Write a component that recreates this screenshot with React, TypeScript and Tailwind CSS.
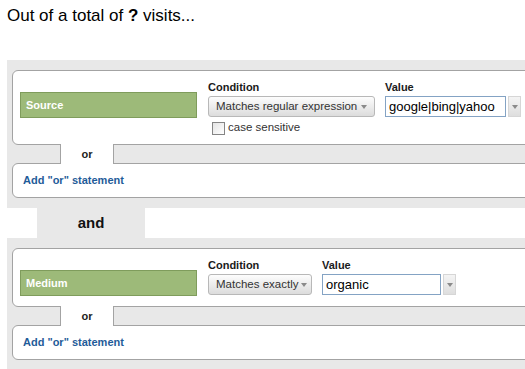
import React from "react";

const Arrow = () => (
  <span className="inline-block h-0 w-0 shrink-0 border-x-[3px] border-t-[4px] border-x-transparent border-t-[#8a8a8a]" />
);

function Select({ label, width }: { label: string; width: string }) {
  return (
    <div
      className={`flex h-[21px] ${width} items-center justify-between gap-[3px] whitespace-nowrap rounded-[3px] border border-[#b8b8b8] bg-gradient-to-b from-[#fdfdfd] to-[#dcdcdc] pl-[7px] pr-[7px] text-[11.5px] text-[#333]`}
    >
      <span>{label}</span>
      <Arrow />
    </div>
  );
}

function ValueBox({ value, width }: { value: string; width: string }) {
  return (
    <div className="flex items-center">
      <div
        className={`flex h-[21px] ${width} items-center whitespace-nowrap border border-[#84a3c4] bg-white pl-[3px] text-[13px] text-black`}
      >
        {value}
      </div>
      <div className="ml-[2px] flex h-[21px] w-[13px] items-center justify-center border border-[#d6d6d6] bg-gradient-to-b from-[#f4f4f4] to-[#dedede]">
        <Arrow />
      </div>
    </div>
  );
}

function ConditionCard({
  dimension,
  match,
  matchWidth,
  value,
  valueWidth,
  caseBox,
}: {
  dimension: string;
  match: string;
  matchWidth: string;
  value: string;
  valueWidth: string;
  caseBox?: boolean;
}) {
  return (
    <div className={`-mr-5 flex rounded-[6px] border border-[#a3a3a3] bg-white pl-[7px] pt-[10px] ${caseBox ? "pb-[9px]" : "pb-[10px]"}`}>
      {/* dimension chip */}
      <div className="mt-[11px] flex h-[26px] w-[177px] items-center border border-[#7f9c5c] bg-[#9dba79] pl-[5px] text-[11px] font-bold text-white">
        {dimension}
      </div>

      <div className="ml-[11px] flex flex-col">
        <span className="text-[11px] font-bold leading-[13px] text-[#1a1a1a]">Condition</span>
        <div className="mt-[2px]">
          <Select label={match} width={matchWidth} />
        </div>
        {caseBox && (
          <div className="ml-[4px] mt-[4px] flex h-[14px] items-center">
            <span className="h-[13px] w-[13px] border border-[#858585] bg-gradient-to-br from-[#e4e4e4] to-white" />
            <span className="ml-[3px] text-[11.5px] text-[#333]">case sensitive</span>
          </div>
        )}
      </div>

      <div className="ml-[10px] flex flex-col">
        <span className="text-[11px] font-bold leading-[13px] text-[#1a1a1a]">Value</span>
        <div className="mt-[2px]">
          <ValueBox value={value} width={valueWidth} />
        </div>
      </div>
    </div>
  );
}

function OrTab() {
  return (
    <div className="relative z-10 -my-px ml-[48px] flex h-[20px] w-[54px] items-center justify-center border-x border-[#a3a3a3] bg-white text-[11px] font-bold text-[#222]">
      or
    </div>
  );
}

function AddOr() {
  return (
    <div className="-mr-5 flex h-[35px] items-center rounded-[6px] border border-[#a3a3a3] bg-white pl-[10px] text-[11px] font-bold text-[#1f5c99]">
      Add "or" statement
    </div>
  );
}

export default function App() {
  return (
    <div className="h-[369px] w-[525px] overflow-hidden bg-white font-['Liberation_Sans',Arial,sans-serif]">
      <h1 className="pl-[7px] pt-[6px] text-[17px] leading-[20px] text-black">
        Out of a total of <b>?</b> visits...
      </h1>

      <div className="ml-[7px] mt-[34px] bg-[#e8e8e8] pb-[10px] pl-[5px] pt-[10px]">
        <ConditionCard
          dimension="Source"
          match="Matches regular expression"
          matchWidth="w-[167px]"
          value="google|bing|yahoo"
          valueWidth="w-[121px]"
          caseBox
        />
        <OrTab />
        <AddOr />
      </div>

      <div className="ml-[37px] flex h-[30px] w-[108px] items-center justify-center bg-[#e8e8e8] text-[15px] font-bold text-[#111]">
        and
      </div>

      <div className="ml-[7px] bg-[#e8e8e8] pb-[10px] pl-[5px] pt-[10px]">
        <ConditionCard
          dimension="Medium"
          match="Matches exactly"
          matchWidth="w-[104px]"
          value="organic"
          valueWidth="w-[119px]"
        />
        <OrTab />
        <AddOr />
      </div>
    </div>
  );
}
